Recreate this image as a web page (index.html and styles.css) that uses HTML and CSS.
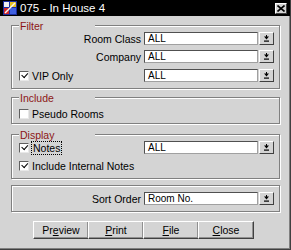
FILE: index.html
```html
<!DOCTYPE html>
<html>
<head>
<meta charset="utf-8">
<link rel="stylesheet" href="styles.css">
</head>
<body>
<div class="window">
  <div class="titlebar">
    <svg class="appicon" width="14" height="14" viewBox="0 0 14 14">
      <rect x="0" y="0" width="14" height="14" fill="#1c2c9c"/>
      <rect x="1" y="1" width="5" height="5" fill="#f0f0f0"/>
      <rect x="7" y="1" width="6" height="5" fill="#e8c020"/>
      <rect x="1" y="7" width="5" height="6" fill="#d02828"/>
      <rect x="7" y="7" width="6" height="6" fill="#4060e0"/>
      <path d="M2 12 L12 2" stroke="#f8f8f8" stroke-width="1.5"/>
    </svg>
    <span class="title">075 - In House 4</span>
    <div class="closebtn">
      <svg width="8" height="7" viewBox="0 0 8 7"><path d="M0.5 0.5 L7.5 6.5 M7.5 0.5 L0.5 6.5" stroke="#000" stroke-width="1.6"/></svg>
    </div>
  </div>
  <div class="content">
    <div class="group g-filter">
      <span class="legend">Filter</span>
      <div class="row">
        <span class="lbl">Room Class</span>
        <div class="combo"><span class="field">ALL</span><span class="drop"><svg width="7" height="7" viewBox="0 0 7 7"><path d="M1 1.5 H6 L3.5 4.5 Z" fill="#000"/><rect x="3" y="0" width="1" height="2" fill="#000"/><rect x="1" y="5.5" width="5" height="1.2" fill="#000"/></svg></span></div>
      </div>
      <div class="row">
        <span class="lbl">Company</span>
        <div class="combo"><span class="field">ALL</span><span class="drop"><svg width="7" height="7" viewBox="0 0 7 7"><path d="M1 1.5 H6 L3.5 4.5 Z" fill="#000"/><rect x="3" y="0" width="1" height="2" fill="#000"/><rect x="1" y="5.5" width="5" height="1.2" fill="#000"/></svg></span></div>
      </div>
      <div class="row row-gap">
        <label class="check"><span class="box checked"></span><span>VIP Only</span></label>
        <div class="combo"><span class="field">ALL</span><span class="drop"><svg width="7" height="7" viewBox="0 0 7 7"><path d="M1 1.5 H6 L3.5 4.5 Z" fill="#000"/><rect x="3" y="0" width="1" height="2" fill="#000"/><rect x="1" y="5.5" width="5" height="1.2" fill="#000"/></svg></span></div>
      </div>
    </div>

    <div class="group g-include">
      <span class="legend">Include</span>
      <div class="row">
        <label class="check"><span class="box"></span><span>Pseudo Rooms</span></label>
      </div>
    </div>

    <div class="group g-display">
      <span class="legend">Display</span>
      <div class="row">
        <label class="check"><span class="box checked"></span><span class="focus">Notes</span></label>
        <div class="combo"><span class="field">ALL</span><span class="drop"><svg width="7" height="7" viewBox="0 0 7 7"><path d="M1 1.5 H6 L3.5 4.5 Z" fill="#000"/><rect x="3" y="0" width="1" height="2" fill="#000"/><rect x="1" y="5.5" width="5" height="1.2" fill="#000"/></svg></span></div>
      </div>
      <div class="row">
        <label class="check"><span class="box checked"></span><span>Include Internal Notes</span></label>
      </div>
    </div>

    <div class="group g-sort">
      <div class="row">
        <span class="lbl">Sort Order</span>
        <div class="combo"><span class="field">Room No.</span><span class="drop"><svg width="7" height="7" viewBox="0 0 7 7"><path d="M1 1.5 H6 L3.5 4.5 Z" fill="#000"/><rect x="3" y="0" width="1" height="2" fill="#000"/><rect x="1" y="5.5" width="5" height="1.2" fill="#000"/></svg></span></div>
      </div>
    </div>

    <div class="buttons">
      <div class="btn">Pr<u>e</u>view</div>
      <div class="btn"><u>P</u>rint</div>
      <div class="btn"><u>F</u>ile</div>
      <div class="btn"><u>C</u>lose</div>
    </div>
  </div>
</div>
</body>
</html>
```

FILE: styles.css
```css
* { box-sizing: border-box; }
html, body { margin: 0; padding: 0; }
body {
  width: 291px;
  height: 250px;
  background: #d4d4d4;
  font-family: "Liberation Sans", Arial, sans-serif;
  font-size: 10px;
  color: #000;
  overflow: hidden;
}
.window {
  width: 291px;
  height: 250px;
  background: #d4d4d4;
  border-right: 1px solid #404040;
  border-bottom: 1px solid #404040;
  box-shadow: inset -1px -1px 0 #808080;
  display: flex;
  flex-direction: column;
}
.titlebar {
  height: 16px;
  background: #000;
  display: flex;
  align-items: center;
  padding-left: 3px;
  padding-right: 3px;
}
.appicon { flex: none; display: block; }
.title {
  color: #fff;
  font-size: 11.5px;
  margin-left: 3px;
  flex: 1;
}
.closebtn {
  width: 12px;
  height: 11px;
  background: #d4d4d4;
  border-top: 1px solid #fff;
  border-left: 1px solid #fff;
  border-right: 1px solid #404040;
  border-bottom: 1px solid #404040;
  display: flex;
  align-items: center;
  justify-content: center;
}
.closebtn svg { display: block; }
.content {
  padding: 9px 0 0 11px;
  display: flex;
  flex-direction: column;
}
.group {
  position: relative;
  width: 269px;
  border: 1px solid #808080;
  box-shadow: 1px 1px 0 #fff, inset 1px 1px 0 #fff;
  display: flex;
  flex-direction: column;
  padding-right: 5px;
}
.legend {
  position: absolute;
  left: 7px;
  top: -6px;
  width: 76px;
  height: 12px;
  line-height: 12px;
  background: #d4d4d4;
  color: #8c1414;
  padding-left: 1px;
  font-size: 10.5px;
}
.g-filter { padding-top: 6px; padding-bottom: 6px; gap: 5px; }
.g-filter .row-gap { margin-top: 1px; }
.g-include { margin-top: 8px; padding-top: 9px; padding-bottom: 3px; }
.g-display { margin-top: 10px; padding-top: 6px; padding-bottom: 6px; gap: 5px; }
.g-sort { margin-top: 6px; padding-top: 6px; padding-bottom: 6px; }
.row {
  height: 13px;
  display: flex;
  align-items: center;
}
.lbl {
  flex: 1;
  text-align: right;
  padding-right: 3px;
  font-size: 10.5px;
}
.check {
  flex: 1;
  display: flex;
  align-items: center;
  padding-left: 7px;
  font-size: 10.5px;
}
.box {
  width: 10px;
  height: 10px;
  background: #fff;
  border-top: 1px solid #606060;
  border-left: 1px solid #606060;
  border-right: 1px solid #e8e8e8;
  border-bottom: 1px solid #e8e8e8;
  margin-right: 3px;
  position: relative;
  flex: none;
}
.box.checked::after {
  content: "";
  position: absolute;
  left: 1px;
  top: 0px;
  width: 5px;
  height: 3px;
  border-left: 1.5px solid #000;
  border-bottom: 1.5px solid #000;
  transform: rotate(-48deg) translate(0px, 1px);
}
.focus {
  outline: 1px dotted #000;
  padding: 0 1px;
}
.combo {
  width: 130px;
  height: 13px;
  display: flex;
  flex: none;
}
.field {
  width: 114px;
  height: 13px;
  background: #fff;
  border: 1px solid #505050;
  border-right-color: #a0a0a0;
  border-bottom-color: #a0a0a0;
  padding-left: 3px;
  line-height: 11px;
  font-size: 10px;
  overflow: hidden;
  white-space: nowrap;
}
.drop {
  width: 15px;
  height: 13px;
  margin-left: 1px;
  background: #d4d4d4;
  border-top: 1px solid #fff;
  border-left: 1px solid #fff;
  border-right: 1px solid #404040;
  border-bottom: 1px solid #404040;
  display: flex;
  align-items: center;
  justify-content: center;
}
.drop svg { display: block; }
.buttons {
  margin-top: 9px;
  padding-left: 22px;
  display: flex;
}
.btn {
  width: 56px;
  height: 18px;
  margin-right: -1px;
  border-top: 1px solid #fff;
  border-left: 1px solid #fff;
  border-right: 1px solid #404040;
  border-bottom: 1px solid #404040;
  box-shadow: inset -1px -1px 0 #909090;
  display: flex;
  align-items: center;
  justify-content: center;
  font-size: 10.5px;
}
.btn u { text-decoration-thickness: 1px; text-underline-offset: 1px; }
```
